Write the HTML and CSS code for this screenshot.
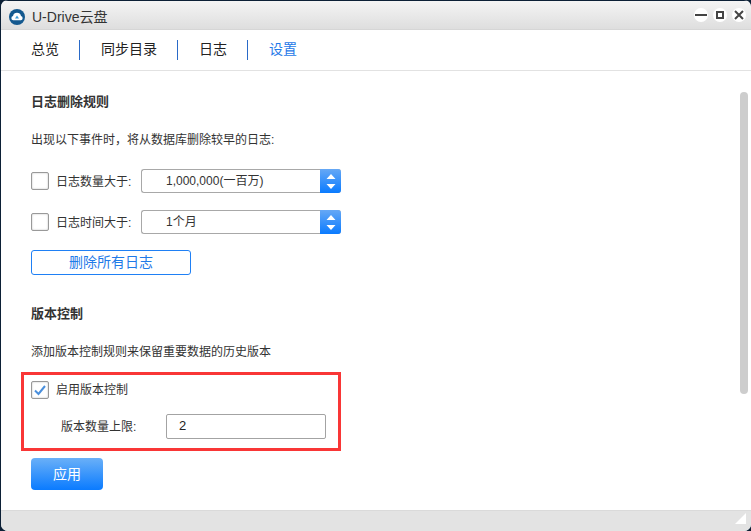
FILE: index.html
```html
<!DOCTYPE html>
<html lang="zh-CN">
<head>
    <meta charset="UTF-8">
    <meta name="viewport" content="width=device-width, initial-scale=1.0">
    <title>U-Drive云盘</title>
    <link rel="stylesheet" href="styles.css">
</head>
<body>
    <div class="window">
        <header class="titlebar">
            <svg class="logo" width="16" height="16" viewBox="0 0 16 16">
                <circle cx="8" cy="8" r="8" fill="#14598f"/>
                <path d="M4.2 11.2a2.2 2.2 0 0 1 -.2 -4.3a4.1 4.1 0 0 1 8 0a2.2 2.2 0 0 1 -.2 4.3z" fill="#fff"/>
                <path d="M8 6.4l2 3.2h-4z" fill="#3c9ad6"/>
            </svg>
            <span class="app-name">U-Drive云盘</span>
            <div class="win-controls">
                <span class="win-btn"><svg width="12" height="12" viewBox="0 0 12 12"><rect x="0" y="5" width="12" height="2" fill="#444"/></svg></span>
                <span class="win-btn"><svg width="10" height="10" viewBox="0 0 10 10"><rect x="2" y="2" width="6" height="6" fill="none" stroke="#444" stroke-width="2"/></svg></span>
                <span class="win-btn"><svg width="10" height="10" viewBox="0 0 10 10"><path d="M1 1l8 8M9 1l-8 8" stroke="#444" stroke-width="2"/></svg></span>
            </div>
        </header>

        <nav class="tabs">
            <a class="tab">总览</a>
            <a class="tab">同步目录</a>
            <a class="tab">日志</a>
            <a class="tab active">设置</a>
        </nav>

        <main class="content">
            <h2 class="heading">日志删除规则</h2>
            <p class="desc">出现以下事件时，将从数据库删除较早的日志:</p>

            <div class="row row-first">
                <span class="checkbox"></span>
                <label class="row-label">日志数量大于:</label>
                <div class="select">
                    <span class="select-value">1,000,000(一百万)</span>
                    <span class="select-arrows">
                        <svg width="10" height="17" viewBox="0 0 10 17"><path d="M5 1l4.5 5h-9zM5 16l4.5-5h-9z" fill="#fff"/></svg>
                    </span>
                </div>
            </div>
            <div class="row row-second">
                <span class="checkbox"></span>
                <label class="row-label">日志时间大于:</label>
                <div class="select">
                    <span class="select-value">1个月</span>
                    <span class="select-arrows">
                        <svg width="10" height="17" viewBox="0 0 10 17"><path d="M5 1l4.5 5h-9zM5 16l4.5-5h-9z" fill="#fff"/></svg>
                    </span>
                </div>
            </div>
            <button class="btn-outline">删除所有日志</button>

            <h2 class="heading heading-version">版本控制</h2>
            <p class="desc desc-version">添加版本控制规则来保留重要数据的历史版本</p>

            <div class="highlight">
                <div class="enable-row">
                    <span class="checkbox">
                        <svg width="14" height="12" viewBox="0 0 14 12"><path d="M2 6.5l3.500 3.500l6.500-8" fill="none" stroke="#4a8fdc" stroke-width="2"/></svg>
                    </span>
                    <label class="row-label">启用版本控制</label>
                </div>
                <div class="limit-row">
                    <label class="limit-label">版本数量上限:</label>
                    <div class="input">2</div>
                </div>
            </div>

            <button class="btn-apply">应用</button>
            <div class="scrollbar"></div>
        </main>

        <footer class="statusbar">
            <svg class="grip" width="11" height="11" viewBox="0 0 11 11"><path d="M11 0v11h-11z" fill="#fff"/></svg>
        </footer>
    </div>
</body>
</html>
```

FILE: styles.css
```css
* {
    margin: 0;
    padding: 0;
    box-sizing: border-box;
    font-family: "Liberation Sans", "Noto Sans CJK SC", sans-serif;
}
html, body {
    width: 751px;
    height: 531px;
    overflow: hidden;
    background-color: #0c2036;
}
.window {
    width: 750px;
    height: 531px;
    margin-left: 1px;
    background-color: white;
    border-radius: 7px;
    overflow: hidden;
    display: flex;
    flex-direction: column;
}
.titlebar {
    height: 30px;
    flex: none;
    padding-left: 8px;
    display: flex;
    align-items: center;
    border-top: 1px solid #0c2036;
    background: linear-gradient(#f4f4f4, #dedede);
    border-bottom: 1px solid #d6d6d6;
}
.logo {
    margin-right: 7px;
    margin-top: 3px;
}
.app-name {
    font-size: 14px;
    color: #333;
    margin-top: 2px;
}
.win-controls {
    margin-left: auto;
    margin-right: 5px;
    display: flex;
    gap: 5px;
}
.win-btn {
    width: 14px;
    height: 14px;
    background-color: white;
    border-radius: 50%;
    display: flex;
    justify-content: center;
    align-items: center;
}
.tabs {
    height: 41px;
    flex: none;
    padding-left: 30px;
    display: flex;
    align-items: center;
    border-bottom: 1px solid #e2e2e2;
}
.tab {
    height: 20px;
    line-height: 18px;
    font-size: 14px;
    color: #222;
    padding-right: 20px;
    margin-right: 21px;
    border-right: 1px solid #2a6ac8;
}
.tab.active {
    color: #1f7ae8;
    border-right: none;
}
.content {
    flex: 1;
    padding: 21px 0 0 30px;
    position: relative;
}
.heading {
    font-size: 13px;
    line-height: 20px;
    font-weight: bold;
    color: #333;
}
.heading-version {
    margin-top: 29px;
}
.desc {
    font-size: 12px;
    line-height: 18px;
    color: #333;
    margin-top: 19px;
}
.desc-version {
    margin-top: 19px;
}
.row {
    display: flex;
    align-items: center;
    height: 24px;
}
.row-first {
    margin-top: 20px;
}
.row-second {
    margin-top: 17px;
}
.checkbox {
    width: 18px;
    height: 18px;
    flex: none;
    border: 1px solid #999;
    border-radius: 2px;
    box-shadow: inset 0 0 2px #bbb;
    display: flex;
    justify-content: center;
    align-items: center;
    margin-right: 7px;
}
.row-label {
    font-size: 12px;
    color: #333;
    padding-bottom: 2px;
}
.row .row-label {
    width: 85px;
}
.select {
    width: 200px;
    height: 24px;
    display: flex;
    border: 1px solid #a8a8a8;
    border-right: none;
    border-radius: 3px;
}
.select-value {
    flex: 1;
    font-size: 12px;
    line-height: 22px;
    color: #333;
    padding-left: 24px;
}
.select-arrows {
    width: 21px;
    height: 24px;
    margin-top: -1px;
    background: linear-gradient(#66a8f5, #0a7bff);
    border-radius: 0 3px 3px 0;
    display: flex;
    justify-content: center;
    align-items: center;
}
.btn-outline {
    display: block;
    width: 160px;
    height: 25px;
    margin-top: 16px;
    padding-bottom: 3px;
    background-color: white;
    border: 1px solid #1f80f5;
    border-radius: 3px;
    color: #1f7ae8;
    font-size: 14px;
}
.highlight {
    width: 320px;
    height: 79px;
    margin-top: 11px;
    margin-left: -10px;
    border: 3px solid #f93636;
    padding: 5px 0 0 7px;
}
.enable-row {
    display: flex;
    align-items: center;
}
.limit-row {
    display: flex;
    align-items: center;
    margin-top: 15px;
}
.limit-label {
    width: 135px;
    padding-left: 30px;
    padding-bottom: 2px;
    font-size: 12px;
    color: #333;
}
.input {
    width: 160px;
    height: 25px;
    border: 1px solid #a3a3a3;
    border-radius: 2px;
    font-size: 13px;
    line-height: 22px;
    padding-left: 12px;
    color: #222;
}
.btn-apply {
    display: block;
    width: 72px;
    height: 32px;
    margin-top: 7px;
    padding-bottom: 2px;
    border: none;
    border-radius: 4px;
    background: linear-gradient(#6ab0f8, #0a7bff);
    color: white;
    font-size: 14px;
}
.scrollbar {
    position: absolute;
    top: 21px;
    right: 3px;
    width: 8px;
    height: 302px;
    background-color: #cdcdcd;
    border-radius: 4px;
}
.statusbar {
    height: 21px;
    flex: none;
    background-color: #e3e3e3;
    border-top: 1px solid #dadada;
    position: relative;
}
.grip {
    position: absolute;
    right: 5px;
    bottom: 7px;
}
```
